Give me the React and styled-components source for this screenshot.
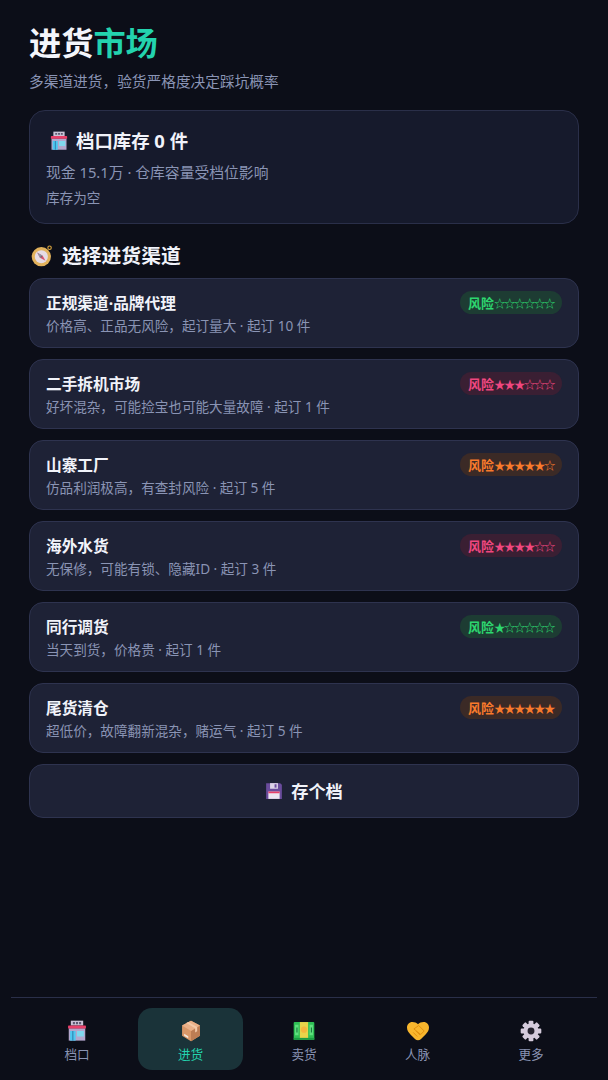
import React from "react";
import styled, { createGlobalStyle } from "styled-components";

const GlobalStyle = createGlobalStyle`
  html, body {
    margin: 0;
    padding: 0;
    background: #0c0e18;
  }
  * {
    box-sizing: border-box;
  }
  body {
    font-family: "Noto Sans", "Noto Sans CJK SC", sans-serif;
    color: #f1f3fa;
  }
`;

const Page = styled.div`
  width: 608px;
  height: 1080px;
  display: flex;
  flex-direction: column;
  padding: 0 11px;
`;

const Main = styled.main`
  flex: 1;
  display: flex;
  flex-direction: column;
  padding: 22px 18px 0;
`;

const Title = styled.h1`
  margin: 0;
  font-size: 32.2px;
  line-height: 42px;
  font-weight: 700;
  color: #f3f5fb;
`;

const Accent = styled.span`
  color: #23d3ae;
`;

const Subtitle = styled.p`
  margin: 6px 0 0;
  font-size: 14.7px;
  line-height: 22px;
  color: #8a94b4;
`;

const StockCard = styled.section`
  margin-top: 18px;
  height: 114px;
  padding: 16px;
  background: #161a2c;
  border: 1px solid #2a2f49;
  border-radius: 16px;
`;

const StockTitle = styled.h2`
  margin: 0;
  display: flex;
  align-items: center;
  gap: 7px;
  padding-left: 3px;
  font-size: 18.4px;
  line-height: 28px;
  font-weight: 700;
  color: #f1f3fa;
`;

const StockLine = styled.p`
  margin: 6px 0 0;
  font-size: 14.8px;
  line-height: 22px;
  color: #8a94b4;
`;

const StockNote = styled.p`
  margin: 5px 0 0;
  font-size: 13.6px;
  line-height: 20px;
  color: #8a94b4;
`;

const SectionTitle = styled.h2`
  margin: 18px 0 8px;
  display: flex;
  align-items: center;
  gap: 9px;
  padding-left: 2px;
  font-size: 19.8px;
  line-height: 28px;
  font-weight: 700;
  color: #f1f3fa;
`;

const ChannelList = styled.div`
  display: flex;
  flex-direction: column;
  gap: 11px;
`;

const ChannelCard = styled.button`
  height: 70px;
  padding: 12px 16px 0;
  display: flex;
  justify-content: space-between;
  align-items: flex-start;
  text-align: left;
  font-family: inherit;
  background: #1e2236;
  border: 1px solid #2e334f;
  border-radius: 14px;
`;

const ChannelName = styled.div`
  font-size: 15.7px;
  line-height: 24px;
  font-weight: 700;
  color: #f1f3fa;
`;

const ChannelDesc = styled.div`
  font-size: 13.6px;
  line-height: 21px;
  color: #8a94b4;
`;

const riskColors = {
  green: { fg: "#2dd66f", bg: "#1d3c33" },
  pink: { fg: "#f0477f", bg: "#3a1f33" },
  orange: { fg: "#f97a2c", bg: "#3b2a26" },
};

const RiskBadge = styled.span`
  width: 102px;
  height: 23px;
  display: flex;
  align-items: center;
  justify-content: center;
  border-radius: 12px;
  font-size: 13px;
  font-weight: 700;
  white-space: nowrap;
  color: ${props => riskColors[props.$tone].fg};
  background: ${props => riskColors[props.$tone].bg};
`;

const Stars = styled.span`
  font-size: 11.5px;
  font-weight: 400;
  letter-spacing: -1.5px;
`;

const SaveButton = styled.button`
  margin-top: 11px;
  height: 54px;
  display: flex;
  align-items: center;
  justify-content: center;
  gap: 8px;
  padding-bottom: 2px;
  font-family: inherit;
  font-size: 17.2px;
  font-weight: 700;
  color: #f1f3fa;
  background: #1e2236;
  border: 1px solid #2e334f;
  border-radius: 14px;
`;

const BottomNav = styled.nav`
  height: 83px;
  flex-shrink: 0;
  display: grid;
  grid-template-columns: repeat(5, 105px);
  justify-content: start;
  column-gap: 8.5px;
  padding: 10px 0 0 13.5px;
  border-top: 1px solid #2a2f49;
`;

const NavItem = styled.div`
  height: 62px;
  display: flex;
  flex-direction: column;
  align-items: center;
  gap: 4px;
  padding-top: 12px;
  border-radius: 14px;
  font-size: 12.6px;
  line-height: 18px;
  color: ${props => (props.$active ? "#23d3ae" : "#8a94b4")};
  background: ${props => (props.$active ? "#1a3339" : "transparent")};
`;

const EmojiSvg = styled.svg`
  display: block;
  flex-shrink: 0;
`;

const Store = ({ size }) => (
  <EmojiSvg width={size} height={size} viewBox="0 0 32 32">
    <rect x="7" y="1" width="18" height="7" fill="#c9c3d6" />
    <path d="M10 3h3v3h-3zM14.500 3h3v3h-3zM19 3h3v3h-3z" fill="#5d5a72" />
    <rect x="4" y="12" width="24" height="18" fill="#b3a6cc" />
    <rect x="3" y="8" width="26" height="4.500" rx="1" fill="#e8406a" />
    <rect x="6" y="16" width="8" height="14" fill="#4cc8f0" />
    <rect x="9.400" y="16" width="1.200" height="14" fill="#2a6a9a" />
    <rect x="16" y="16" width="10" height="8" fill="#7fd8ee" />
  </EmojiSvg>
);

const Compass = ({ size }) => (
  <EmojiSvg width={size} height={size} viewBox="0 0 32 32">
    <circle cx="27" cy="4" r="2.500" fill="none" stroke="#e0a93f" strokeWidth="1.600" />
    <circle cx="15" cy="17" r="14" fill="#e2b25c" />
    <circle cx="15" cy="17" r="9.500" fill="#e6dce4" />
    <path d="M9 11l8 4.500 4 7.500-8-4.500z" fill="#d8546f" />
    <path d="M9 11l4 7.500 4-3z" fill="#8f96a8" />
    <circle cx="15" cy="17" r="1.300" fill="#7a6a70" />
  </EmojiSvg>
);

const Box = ({ size }) => (
  <EmojiSvg width={size} height={size} viewBox="0 0 32 32">
    <path d="M16 1l13 7v15l-13 8-13-8V8z" fill="#d99768" />
    <path d="M16 16l13-8v15l-13 8z" fill="#bd7d54" />
    <path d="M16 1l13 7-13 8-13-8z" fill="#eab088" />
    <path d="M9 4.500l13 7.500v6l3-1.700v-6L12 3z" fill="#f3c9a8" />
    <path d="M6 20l6 3.500v3L6 23z" fill="#f5e8dc" />
  </EmojiSvg>
);

const Money = ({ size }) => (
  <EmojiSvg width={size} height={size} viewBox="0 0 32 32">
    <rect x="1" y="3" width="30" height="26" rx="1.500" fill="#2fbf55" />
    <rect x="10" y="3" width="12" height="26" fill="#e9d44a" />
    <rect x="1" y="26" width="30" height="3" fill="#1d9a44" />
    <circle cx="16" cy="14" r="4.500" fill="#f6b73c" />
    <path d="M3 7h5v15H3zM24 7h5v15h-5z" fill="#5fe07e" />
    <path d="M5 11h1.500v7H5zM26 11h1.500v7H26z" fill="#15703a" />
  </EmojiSvg>
);

const Handshake = ({ size }) => (
  <EmojiSvg width={size} height={size} viewBox="0 0 32 32">
    <path d="M8 3c3 0 6 1 8 3 2-2 5-3 8-3 5 0 8 4 8 8 0 4-2 7-5 10l-7 7c-2 2-6 2-8 0l-7-7c-3-3-5-6-5-10 0-4 3-8 8-8z" fill="#f8b62d" />
    <path d="M10 13l7-5 8 8-5 5zM9 18l6 6M13 16l6 6" fill="none" stroke="#e2900f" strokeWidth="1.400" />
  </EmojiSvg>
);

const Gear = ({ size }) => (
  <EmojiSvg width={size} height={size} viewBox="0 0 32 32">
    <g fill="#d5cbdc">
      <circle cx="16" cy="16" r="11" />
      {[0, 45, 90, 135, 180, 225, 270, 315].map(deg => (
        <rect key={deg} x="12.500" y="1" width="7" height="8" rx="1.500" transform={`rotate(${deg} 16 16)`} />
      ))}
    </g>
    <circle cx="16" cy="16" r="5" fill="#26232f" />
  </EmojiSvg>
);

const Floppy = ({ size }) => (
  <EmojiSvg width={size} height={size} viewBox="0 0 32 32">
    <path d="M2 2h25l3 3v25H2z" fill="#6a4c9c" />
    <rect x="9" y="2" width="14" height="10" fill="#dcd3e8" />
    <rect x="17" y="4" width="3.500" height="6" fill="#6a4c9c" />
    <rect x="6" y="17" width="20" height="13" fill="#ece6f2" />
    <rect x="6" y="17" width="20" height="3" fill="#e8406a" />
  </EmojiSvg>
);

const channels = [
  { name: "正规渠道·品牌代理", desc: "价格高、正品无风险，起订量大 · 起订 10 件", tone: "green", stars: "☆☆☆☆☆☆" },
  { name: "二手拆机市场", desc: "好坏混杂，可能捡宝也可能大量故障 · 起订 1 件", tone: "pink", stars: "★★★☆☆☆" },
  { name: "山寨工厂", desc: "仿品利润极高，有查封风险 · 起订 5 件", tone: "orange", stars: "★★★★★☆" },
  { name: "海外水货", desc: "无保修，可能有锁、隐藏ID · 起订 3 件", tone: "pink", stars: "★★★★☆☆" },
  { name: "同行调货", desc: "当天到货，价格贵 · 起订 1 件", tone: "green", stars: "★☆☆☆☆☆" },
  { name: "尾货清仓", desc: "超低价，故障翻新混杂，赌运气 · 起订 5 件", tone: "orange", stars: "★★★★★★" },
];

const navItems = [
  { label: "档口", Icon: Store },
  { label: "进货", Icon: Box, active: true },
  { label: "卖货", Icon: Money },
  { label: "人脉", Icon: Handshake },
  { label: "更多", Icon: Gear },
];

export default function App() {
  return (
    <>
      <GlobalStyle />
      <Page>
        <Main>
          <Title>
            进货<Accent>市场</Accent>
          </Title>
          <Subtitle>多渠道进货，验货严格度决定踩坑概率</Subtitle>

          <StockCard>
            <StockTitle>
              <Store size={20} />
              档口库存 0 件
            </StockTitle>
            <StockLine>现金 15.1万 · 仓库容量受档位影响</StockLine>
            <StockNote>库存为空</StockNote>
          </StockCard>

          <SectionTitle>
            <Compass size={22} />
            选择进货渠道
          </SectionTitle>

          <ChannelList>
            {channels.map(c => (
              <ChannelCard key={c.name}>
                <div>
                  <ChannelName>{c.name}</ChannelName>
                  <ChannelDesc>{c.desc}</ChannelDesc>
                </div>
                <RiskBadge $tone={c.tone}>
                  风险<Stars>{c.stars}</Stars>
                </RiskBadge>
              </ChannelCard>
            ))}
          </ChannelList>

          <SaveButton>
            <Floppy size={18} />
            存个档
          </SaveButton>
        </Main>

        <BottomNav>
          {navItems.map(({ label, Icon, active }) => (
            <NavItem key={label} $active={active}>
              <Icon size={22} />
              {label}
            </NavItem>
          ))}
        </BottomNav>
      </Page>
    </>
  );
}
